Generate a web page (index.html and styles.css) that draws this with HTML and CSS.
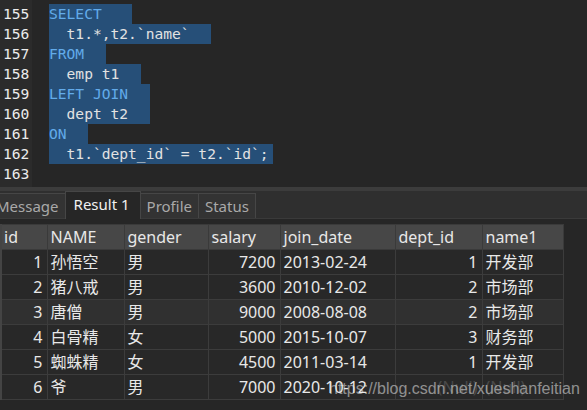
FILE: index.html
```html
<!DOCTYPE html>
<html lang="zh-CN">
<head>
<meta charset="utf-8">
<title>Navicat query</title>
<link rel="stylesheet" href="styles.css">
</head>
<body>
<div class="app">
  <div class="editor">
    <div class="gutter">
      <div class="ln">155</div>
      <div class="ln">156</div>
      <div class="ln">157</div>
      <div class="ln">158</div>
      <div class="ln">159</div>
      <div class="ln">160</div>
      <div class="ln">161</div>
      <div class="ln">162</div>
      <div class="ln">163</div>
    </div>
    <div class="code">
      <div class="line"><span class="sel"><span class="kw">SELECT</span>   </span></div>
      <div class="line"><span class="sel">  t1.*,t2.`name`  </span></div>
      <div class="line"><span class="sel"><span class="kw">FROM</span>  </span></div>
      <div class="line"><span class="sel">  emp t1  </span></div>
      <div class="line"><span class="sel"><span class="kw">LEFT JOIN</span>  </span></div>
      <div class="line"><span class="sel">  dept t2  </span></div>
      <div class="line"><span class="sel"><span class="kw">ON</span>  </span></div>
      <div class="line"><span class="sel">  t1.`dept_id` = t2.`id`;</span></div>
      <div class="line"> </div>
    </div>
  </div>
  <div class="splitter"></div>
  <div class="tabbar">
    <div class="tab first">Message</div>
    <div class="tab active">Result 1</div>
    <div class="tab">Profile</div>
    <div class="tab">Status</div>
  </div>
  <div class="results">
    <table class="grid">
      <colgroup>
        <col class="c-id"><col class="c-name"><col class="c-gender"><col class="c-salary"><col class="c-date"><col class="c-dept"><col class="c-name1">
      </colgroup>
      <thead>
        <tr><th>id</th><th>NAME</th><th>gender</th><th>salary</th><th>join_date</th><th>dept_id</th><th>name1</th></tr>
      </thead>
      <tbody>
        <tr><td class="num">1</td><td>孙悟空</td><td>男</td><td class="num">7200</td><td>2013-02-24</td><td class="num">1</td><td>开发部</td></tr>
        <tr><td class="num">2</td><td>猪八戒</td><td>男</td><td class="num">3600</td><td>2010-12-02</td><td class="num">2</td><td>市场部</td></tr>
        <tr class="alt"><td class="num">3</td><td>唐僧</td><td>男</td><td class="num">9000</td><td>2008-08-08</td><td class="num">2</td><td>市场部</td></tr>
        <tr><td class="num">4</td><td>白骨精</td><td>女</td><td class="num">5000</td><td>2015-10-07</td><td class="num">3</td><td>财务部</td></tr>
        <tr><td class="num">5</td><td>蜘蛛精</td><td>女</td><td class="num">4500</td><td>2011-03-14</td><td class="num">1</td><td>开发部</td></tr>
        <tr><td class="num">6</td><td>爷</td><td>男</td><td class="num">7000</td><td>2020-10-12</td><td class="num null">(Null)</td><td class="null">(Null)</td></tr>
      </tbody>
    </table>
    <div class="watermark">https://blog.csdn.net/xueshanfeitian</div>
  </div>
</div>
</body>
</html>
```

FILE: styles.css
```css
html, body {
  margin: 0;
  padding: 0;
  background: #262626;
  overflow: hidden;
}

.app {
  width: 587px;
  height: 410px;
  display: flex;
  flex-direction: column;
  background: #262626;
}

/* editor */
.editor {
  display: flex;
  height: 187px;
  flex: none;
  background: #262626;
  font-family: "DejaVu Sans Mono", "Liberation Mono", monospace;
  font-size: 14.6px;
}

.gutter {
  width: 32px;
  flex: none;
  background: #2b2b2b;
  padding-top: 4px;
  box-sizing: border-box;
  color: #ececec;
}

.ln {
  height: 20px;
  line-height: 20px;
  padding-left: 3px;
}

.code {
  flex: 1;
  padding: 4px 0 0 17px;
  color: #e2e2e2;
}

.line {
  height: 20px;
  line-height: 20px;
  white-space: pre;
}

.sel {
  display: inline-block;
  height: 20px;
  background: #264f78;
  padding-right: 4px;
}

.kw {
  color: #62abea;
}

/* splitter + tabs */
.splitter {
  height: 4px;
  flex: none;
  background: #3c3c3c;
}

.tabbar {
  height: 27px;
  flex: none;
  display: flex;
  align-items: flex-end;
  background: #2f2f2f;
  border-bottom: 1px solid #3a3a3a;
  font-family: "Noto Sans", "Noto Sans CJK SC", sans-serif;
  font-size: 15px;
}

.tab {
  height: 25px;
  line-height: 24px;
  box-sizing: border-box;
  padding: 0 6px;
  margin-left: -1px;
  border: 1px solid #464646;
  border-bottom: none;
  background: #333333;
  color: #a9a9a9;
}

.tab.first {
  margin-left: -11px;
}

.tab.active {
  height: 28px;
  line-height: 24px;
  padding: 0 10px 0 8px;
  margin-bottom: -1px;
  background: #262626;
  color: #f0f0f0;
}

/* result grid */
.results {
  position: relative;
  flex: 1;
  padding-top: 5px;
  background: #262626;
}

.grid {
  border-collapse: collapse;
  table-layout: fixed;
  width: 562px;
  font-family: "Noto Sans", "Noto Sans CJK SC", sans-serif;
  font-size: 16px;
  color: #e8e8e8;
}

.c-id { width: 46px; }
.c-name { width: 77px; }
.c-gender { width: 84px; }
.c-salary { width: 72px; }
.c-date { width: 115px; }
.c-dept { width: 87px; }
.c-name1 { width: 81px; }

.grid th,
.grid td {
  height: 24px;
  padding: 0 3px;
  border: 1px solid #3c3c3c;
  text-align: left;
  font-weight: normal;
  white-space: nowrap;
  overflow: hidden;
  line-height: 22px;
}

.grid th {
  background: #474747;
  border-color: #3a3a3a;
}

.grid th:first-child,
.grid td:first-child {
  border-left: 2px solid #444444;
  padding-left: 2px;
}

.grid tbody tr {
  background: #282828;
}

.grid tbody tr.alt {
  background: #303030;
}

.grid td.num {
  text-align: right;
  padding-right: 4px;
}

.grid td.null {
  color: #4a4a4a;
}

.watermark {
  position: absolute;
  left: 329px;
  top: 161px;
  font-family: "Liberation Sans", Arial, sans-serif;
  font-size: 16px;
  color: rgba(235, 235, 235, 0.55);
  white-space: nowrap;
}
```
